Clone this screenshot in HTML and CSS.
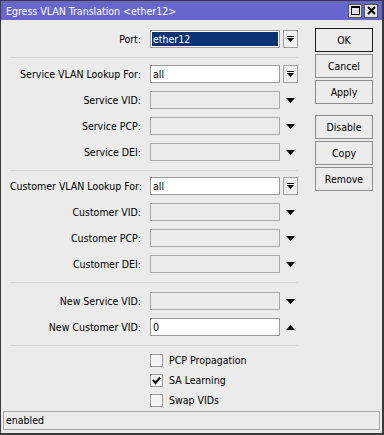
FILE: index.html
```html
<!DOCTYPE html>
<html lang="en">
<head>
    <meta charset="UTF-8">
    <title>Egress VLAN Translation</title>
    <link rel="stylesheet" href="styles.css">
</head>
<body>
    <div class="window">
        <div class="titlebar">
            <span class="title">Egress VLAN Translation &lt;ether12&gt;</span>
            <span class="tbtns">
                <span class="tbtn"><svg width="9" height="9" viewBox="0 0 9 9"><rect x="0.5" y="0.5" width="8" height="8" fill="none" stroke="#000"/><rect x="0" y="0" width="9" height="2" fill="#000"/></svg></span>
                <span class="tbtn"><svg width="9" height="9" viewBox="0 0 9 9"><path d="M1 1 L8 8 M8 1 L1 8" stroke="#000" stroke-width="2"/></svg></span>
            </span>
        </div>
        <div class="body">
            <div class="form">
                <div class="group first">
                    <div class="row">
                        <label>Port:</label>
                        <div class="field selected">ether12</div>
                        <span class="combo"><svg width="7" height="7" viewBox="0 0 7 7"><rect x="0" y="0" width="7" height="1"/><polygon points="0,2 7,2 3.5,6"/></svg></span>
                    </div>
                </div>
                <div class="group">
                    <div class="row">
                        <label>Service VLAN Lookup For:</label>
                        <div class="field">all</div>
                        <span class="combo"><svg width="7" height="7" viewBox="0 0 7 7"><rect x="0" y="0" width="7" height="1"/><polygon points="0,2 7,2 3.5,6"/></svg></span>
                    </div>
                    <div class="row">
                        <label>Service VID:</label>
                        <div class="field off"></div>
                        <span class="arrow"><svg width="9" height="5" viewBox="0 0 9 5"><polygon points="0,0 9,0 4.5,5"/></svg></span>
                    </div>
                    <div class="row">
                        <label>Service PCP:</label>
                        <div class="field off"></div>
                        <span class="arrow"><svg width="9" height="5" viewBox="0 0 9 5"><polygon points="0,0 9,0 4.5,5"/></svg></span>
                    </div>
                    <div class="row">
                        <label>Service DEI:</label>
                        <div class="field off"></div>
                        <span class="arrow"><svg width="9" height="5" viewBox="0 0 9 5"><polygon points="0,0 9,0 4.5,5"/></svg></span>
                    </div>
                </div>
                <div class="group tight">
                    <div class="row">
                        <label>Customer VLAN Lookup For:</label>
                        <div class="field">all</div>
                        <span class="combo"><svg width="7" height="7" viewBox="0 0 7 7"><rect x="0" y="0" width="7" height="1"/><polygon points="0,2 7,2 3.5,6"/></svg></span>
                    </div>
                    <div class="row">
                        <label>Customer VID:</label>
                        <div class="field off"></div>
                        <span class="arrow"><svg width="9" height="5" viewBox="0 0 9 5"><polygon points="0,0 9,0 4.5,5"/></svg></span>
                    </div>
                    <div class="row">
                        <label>Customer PCP:</label>
                        <div class="field off"></div>
                        <span class="arrow"><svg width="9" height="5" viewBox="0 0 9 5"><polygon points="0,0 9,0 4.5,5"/></svg></span>
                    </div>
                    <div class="row">
                        <label>Customer DEI:</label>
                        <div class="field off"></div>
                        <span class="arrow"><svg width="9" height="5" viewBox="0 0 9 5"><polygon points="0,0 9,0 4.5,5"/></svg></span>
                    </div>
                </div>
                <div class="group loose">
                    <div class="row">
                        <label>New Service VID:</label>
                        <div class="field off"></div>
                        <span class="arrow"><svg width="9" height="5" viewBox="0 0 9 5"><polygon points="0,0 9,0 4.5,5"/></svg></span>
                    </div>
                    <div class="row">
                        <label>New Customer VID:</label>
                        <div class="field">0</div>
                        <span class="arrow"><svg width="9" height="5" viewBox="0 0 9 5"><polygon points="0,5 9,5 4.5,0"/></svg></span>
                    </div>
                </div>
                <div class="checks">
                    <div class="check"><span class="box"></span>PCP Propagation</div>
                    <div class="check"><span class="box"><svg width="9" height="9" viewBox="0 0 9 9"><path d="M1 4 L3.5 7 L8 1.5" fill="none" stroke="#000" stroke-width="2"/></svg></span>SA Learning</div>
                    <div class="check"><span class="box"></span>Swap VIDs</div>
                </div>
            </div>
            <div class="actions">
                <div class="btn default">OK</div>
                <div class="btn">Cancel</div>
                <div class="btn">Apply</div>
                <div class="btn spaced">Disable</div>
                <div class="btn">Copy</div>
                <div class="btn">Remove</div>
            </div>
        </div>
        <div class="status">enabled</div>
    </div>
</body>
</html>
```

FILE: styles.css
```css
* {
    margin: 0;
    padding: 0;
    box-sizing: border-box;
}
body {
    font-family: "DejaVu Sans Condensed", "DejaVu Sans", sans-serif;
    font-size: 10.5px;
    color: #000;
    background: #ebebeb;
}
.window {
    width: 384px;
    height: 435px;
    border: 1px solid #3a3a3a;
    border-right-width: 2px;
    border-bottom-width: 2px;
    background: #ebebeb;
    display: flex;
    flex-direction: column;
}
.titlebar {
    height: 20px;
    background: #6666cc;
    display: flex;
    align-items: center;
    justify-content: space-between;
    padding: 0 4px 0 5px;
}
.title {
    color: #fff;
    font-size: 10.5px;
}
.tbtns {
    display: flex;
    gap: 2px;
}
.tbtn {
    width: 14px;
    height: 14px;
    background: #e4e4e4;
    border: 1px solid #555;
    display: flex;
    align-items: center;
    justify-content: center;
}
.body {
    display: flex;
    padding: 10px 0 0 9px;
    flex: 1;
}
.form {
    width: 288px;
}
.group {
    padding: 7px 0 9px;
    border-bottom: 1px solid #d6d6d6;
    display: flex;
    flex-direction: column;
    gap: 8px;
}
.group.first {
    padding-top: 0;
}
.group.tight {
    padding-top: 6px;
}
.group.loose {
    padding-top: 9px;
}
.row {
    display: grid;
    grid-template-columns: 137px 130px 15px;
    column-gap: 3px;
    height: 18px;
    align-items: center;
}
.row label {
    text-align: right;
    padding-right: 6px;
    white-space: nowrap;
}
.field {
    height: 18px;
    line-height: 16px;
    border: 1px solid #9c9c9c;
    background: #fff;
    padding-left: 2px;
}
.field.off {
    background: #ebebeb;
    border-color: #a8a8a8;
}
.field.selected {
    background: #0a3275;
    color: #fff;
    box-shadow: inset 0 0 0 1px #fff;
    border-color: #a0a0a0;
}
.combo {
    height: 18px;
    border: 1px solid #a0a0a0;
    background: #f0f0f0;
    display: flex;
    align-items: center;
    justify-content: center;
}
.arrow {
    display: flex;
    justify-content: center;
}
.checks {
    padding: 7px 0 4px 140px;
    display: flex;
    flex-direction: column;
    gap: 6px;
}
.check {
    display: flex;
    align-items: center;
    height: 14px;
}
.box {
    width: 13px;
    height: 13px;
    border: 1px solid #9c9c9c;
    background: #f4f4f4;
    margin-right: 6px;
    display: flex;
    align-items: center;
    justify-content: center;
}
.actions {
    margin-left: 17px;
    margin-top: -2px;
    display: flex;
    flex-direction: column;
    gap: 2px;
}
.btn {
    width: 58px;
    height: 24px;
    line-height: 22px;
    text-align: center;
    border: 1px solid #8c8c8c;
    background: #ececec;
}
.btn.default {
    border-color: #1a1a1a;
}
.btn.spaced {
    margin-top: 9px;
}
.status {
    height: 19px;
    margin: 0 2px 3px 2px;
    border: 1px solid #a6a6a6;
    line-height: 17px;
    padding-left: 2px;
}
```
